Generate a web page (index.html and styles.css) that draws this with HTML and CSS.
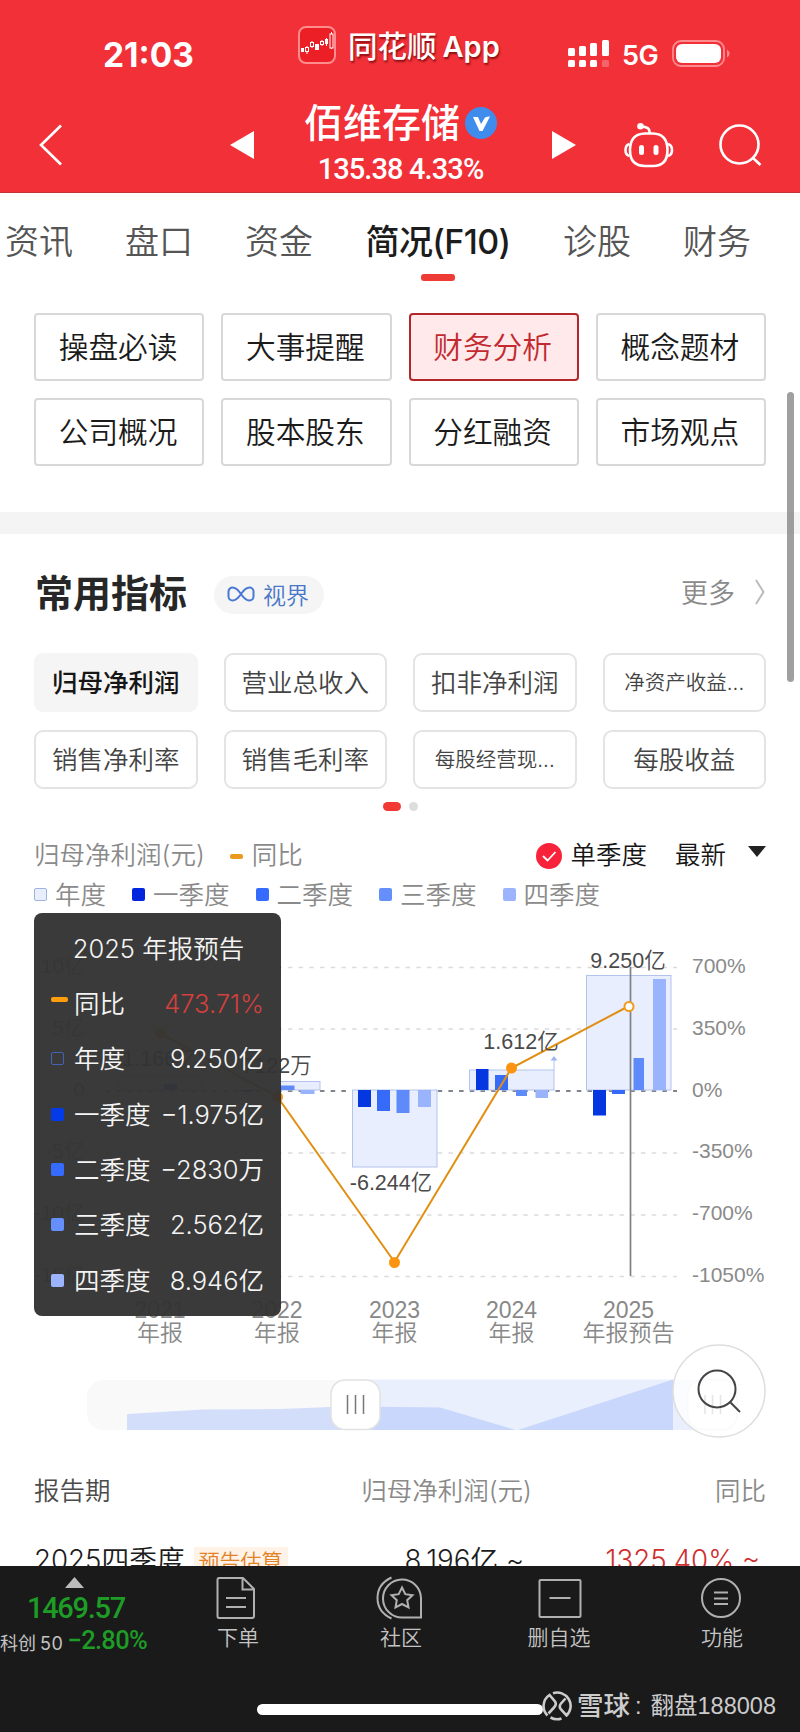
FILE: index.html
```html
<!DOCTYPE html>
<html lang="zh-CN">
<head>
<meta charset="utf-8">
<title>佰维存储</title>
<link rel="stylesheet" href="styles.css">
</head>
<body>
<div class="phone">
  <main class="screen">
    <header class="header">
      <div class="status">
        <span class="time">21:03</span>
        <svg class="app-icon" width="38" height="38" viewBox="0 0 38 38">
          <rect x="1" y="1" width="36" height="36" rx="7" fill="#ec1f26" stroke="#ff8d8d" stroke-width="2"/>
          <g fill="#fff"><rect x="3" y="22" width="3" height="4"/><rect x="17" y="18" width="4" height="6"/><rect x="27" y="13" width="3" height="5"/></g>
          <g fill="none" stroke="#fff"><path d="M9 21v-1M9 26v2M14 15v1M14 21v1M24 14v1M24 19v1M33.500 6v2M33.500 22v1M28.500 12v8"/><rect x="7.500" y="21.500" width="3" height="4"/><rect x="12.500" y="16.500" width="3" height="4"/><rect x="22.500" y="15.500" width="3" height="3"/><rect x="32" y="8" width="3" height="14"/></g>
        </svg>
        <span class="app-name">同花顺<span class="app-latin">App</span></span>
        <svg class="signal" width="42" height="30" viewBox="0 0 42 30" fill="#fff">
          <rect x="0" y="9" width="7" height="8" rx="1.500"/><rect x="11" y="7" width="7" height="10" rx="1.500"/><rect x="22" y="4" width="7" height="13" rx="1.500"/><rect x="34" y="1" width="7" height="16" rx="1.500"/>
          <rect x="0" y="21" width="7" height="7" rx="1.500"/><rect x="11" y="21" width="7" height="7" rx="1.500"/><rect x="22" y="21" width="7" height="7" rx="1.500"/><rect x="34" y="21" width="7" height="7" rx="1.500" opacity=".25"/>
        </svg>
        <span class="net">5G</span>
        <svg class="battery" width="58" height="27" viewBox="0 0 58 27">
          <rect x="1" y="1" width="51" height="25" rx="8" fill="none" stroke="#ff8b8f" stroke-width="1.800"/>
          <rect x="4" y="4" width="45" height="19" rx="6" fill="#fff"/><path d="M55 9.500q5 4 0 8z" fill="#ff8b8f"/>
        </svg>
      </div>
      <div class="nav">
        <svg class="back" width="24" height="42" viewBox="0 0 24 42"><path d="M22 1.500L2 21l20 19.500" fill="none" stroke="#fff" stroke-width="2.600"/></svg>
        <svg class="prev" width="24" height="28" viewBox="0 0 24 28"><path d="M24 0v28L0 14z" fill="#fff"/></svg>
        <div class="stock">
          <div class="stock-name">佰维存储
            <svg width="32" height="32" viewBox="0 0 32 32"><circle cx="16" cy="16" r="16" fill="#3f8cec"/><path d="M8 10h5l3 7 4-6.500q1.500-1 5-1L17.500 24h-3z" fill="#fff"/></svg>
          </div>
          <div class="stock-price">135.38 4.33%</div>
        </div>
        <svg class="next" width="24" height="28" viewBox="0 0 24 28"><path d="M0 0v28L24 14z" fill="#fff"/></svg>
        <svg class="robot" width="50" height="46" viewBox="0 0 50 46" fill="none" stroke="#fff" stroke-width="2.600">
          <path d="M25.500 10V8.500q0-4.500-8-5"/><circle cx="16.500" cy="3.300" r="3.300" fill="#fff" stroke="none"/>
          <path d="M21 10.500h8Q43.500 11 43.500 27 43.500 43 29 43H21Q6 43 6 27 6 11 21 10.500z"/>
          <path d="M5.500 21Q1.500 22 1.500 27t4 6M44 21q4 1 4 6t-4 6"/>
          <rect x="15" y="22" width="5" height="10" rx="2.500" fill="#fff" stroke="none"/><rect x="29.500" y="22" width="5" height="10" rx="2.500" fill="#fff" stroke="none"/>
        </svg>
        <svg class="search" width="43" height="43" viewBox="0 0 43 43" fill="none" stroke="#fff" stroke-width="2.600"><circle cx="20.500" cy="20.500" r="19"/><path d="M34 34l7.500 7"/></svg>
      </div>
    </header>

    <nav class="tabs">
      <span>资讯</span><span>盘口</span><span>资金</span><span class="tab-on">简况(F10)</span><span>诊股</span><span>财务</span>
    </nav>

    <section class="menu">
      <span>操盘必读</span><span>大事提醒</span><span class="menu-on">财务分析</span><span>概念题材</span>
      <span>公司概况</span><span>股本股东</span><span>分红融资</span><span>市场观点</span>
    </section>
    <div class="divider"></div>

    <section class="head">
      <h2>常用指标</h2>
      <span class="pill"><svg width="28" height="16" viewBox="0 0 28 16"><path d="M14 8C10 2 8 1.500 5.500 1.500A4 4 0 0 0 1.500 5.500v5a4 4 0 0 0 4 4C8 14.500 10 14 14 8s6-6.500 8.500-6.500a4 4 0 0 1 4 4v5a4 4 0 0 1-4 4C20 14.500 18 14 14 8z" fill="none" stroke="#4a78d4" stroke-width="2"/></svg>视界</span>
      <span class="more">更多<svg width="10" height="26" viewBox="0 0 10 26"><path d="M1 1l7.500 12L1 25" fill="none" stroke="#bbb" stroke-width="2"/></svg></span>
    </section>

    <section class="metrics">
      <span class="metric-on">归母净利润</span><span>营业总收入</span><span>扣非净利润</span><span class="small">净资产收益...</span>
      <span>销售净利率</span><span>销售毛利率</span><span class="small">每股经营现...</span><span>每股收益</span>
    </section>
    <div class="dots"><i class="dot-on"></i><i></i></div>

    <div class="legend-top">
      <span>归母净利润(元)</span><i class="dash"></i><span>同比</span>
      <svg class="check" width="26" height="26" viewBox="0 0 26 26"><circle cx="13" cy="13" r="13" fill="#f8233b"/><path d="M7 13l4.500 4.500L19.500 9" fill="none" stroke="#fff" stroke-width="1.800"/></svg>
      <span class="ink">单季度</span><span class="ink latest">最新</span><svg class="caret" width="18" height="11" viewBox="0 0 18 11"><path d="M0 0h18L9 11z" fill="#222"/></svg>
    </div>
    <div class="legend">
      <span><i class="sq year"></i>年度</span><span><i class="sq q1"></i>一季度</span><span><i class="sq q2"></i>二季度</span><span><i class="sq q3"></i>三季度</span><span><i class="sq q4"></i>四季度</span>
    </div>

    <section class="chart">
      <svg class="plot" width="800" height="457" viewBox="0 913 800 457">
        <g stroke="#dcdcdc" stroke-width="1.300" stroke-dasharray="4.500 6.200"><path d="M106 967.500H677M106 1029H677M106 1153H677M106 1215H677M106 1276.500H677"/></g>
        <path d="M106 1091H677" stroke="#555b66" stroke-width="1.600" stroke-dasharray="4.500 6.200"/>
        <g fill="#e8eefd" stroke="#b4c3ee">
          <rect x="118" y="1076" width="84" height="14"/><rect x="235" y="1081.500" width="85" height="8.500"/><rect x="352.500" y="1090" width="84.500" height="77"/><rect x="469.500" y="1070" width="84.500" height="20"/><rect x="586.500" y="975.500" width="84.500" height="114.500"/>
        </g>
        <path d="M554 1070v-11" stroke="#b4c3ee"/><path d="M550.500 1060.500h7l-3.500-4.500z" fill="#9eb5f2"/>
        <g fill="#0437df"><rect x="358" y="1090" width="13" height="17"/><rect x="476" y="1069" width="12.500" height="21"/><rect x="593" y="1090" width="13" height="25.500"/><rect x="241" y="1090" width="13" height="1.500"/></g>
        <g fill="#356bf8"><rect x="377" y="1090" width="13" height="21"/><rect x="495" y="1075" width="13" height="15"/><rect x="612" y="1090" width="13" height="4"/><rect x="164" y="1084" width="13" height="6"/></g>
        <g fill="#5f8bfa"><rect x="396.500" y="1090" width="13" height="23"/><rect x="516" y="1090" width="11" height="6"/><rect x="633.500" y="1058" width="10.500" height="32"/><rect x="280" y="1085.500" width="14.500" height="4.500"/></g>
        <g fill="#9ab3fd"><rect x="418" y="1090" width="13" height="17"/><rect x="535.500" y="1090" width="12.500" height="8"/><rect x="653" y="979" width="13" height="111"/><rect x="300.500" y="1090" width="14" height="4"/></g>
        <path d="M630.500 967v309" stroke="#808080" stroke-width="1.700"/>
        <path d="M160 1033L277.500 1097 394.500 1262 511.500 1068 629 1006" fill="none" stroke="#e08f12" stroke-width="2"/>
        <g fill="#fb9410"><circle cx="160" cy="1033" r="5.500"/><circle cx="277.500" cy="1097" r="5.500"/><circle cx="394.500" cy="1262.500" r="5.500"/><circle cx="511.500" cy="1068" r="5.500"/></g>
        <circle cx="629" cy="1006.500" r="4.500" fill="#fff" stroke="#f29a1c" stroke-width="2"/>
        <g class="values"><text x="160" y="1066">1.166亿</text><text x="277" y="1073">7122万</text><text x="391" y="1190">-6.244亿</text><text x="521" y="1049">1.612亿</text><text x="628" y="967.500">9.250亿</text></g>
        <g class="axis"><text x="692" y="973">700%</text><text x="692" y="1035">350%</text><text x="692" y="1096.500">0%</text><text x="692" y="1158">-350%</text><text x="692" y="1220">-700%</text><text x="692" y="1282">-1050%</text></g>
        <g class="axis left"><text x="85" y="973">10亿</text><text x="85" y="1035">5亿</text><text x="85" y="1096.500">0</text><text x="85" y="1158">-5亿</text><text x="85" y="1220">-10亿</text><text x="85" y="1282">-15亿</text></g>
        <g class="years"><text x="160" y="1318">2021</text><text x="160" y="1341">年报</text><text x="277" y="1318">2022</text><text x="277" y="1341">年报</text><text x="394.500" y="1318">2023</text><text x="394.500" y="1341">年报</text><text x="511.500" y="1318">2024</text><text x="511.500" y="1341">年报</text><text x="628.500" y="1318">2025</text><text x="628.500" y="1341">年报预告</text></g>
      </svg>
      <div class="tooltip">
        <div class="tip-title">2025 年报预告</div>
        <div class="tip-row"><i class="dash tip-dash"></i><span>同比</span><b class="up">473.71%</b></div>
        <div class="tip-row"><i class="sq tip-year"></i><span>年度</span><b>9.250亿</b></div>
        <div class="tip-row"><i class="sq q1t"></i><span>一季度</span><b>−1.975亿</b></div>
        <div class="tip-row"><i class="sq q2"></i><span>二季度</span><b>−2830万</b></div>
        <div class="tip-row"><i class="sq q3"></i><span>三季度</span><b>2.562亿</b></div>
        <div class="tip-row"><i class="sq q4"></i><span>四季度</span><b>8.946亿</b></div>
      </div>
    </section>

    <div class="slider">
      <svg class="plot" width="800" height="70" viewBox="0 1370 800 70">
        <rect x="87" y="1380" width="650" height="50" rx="16" fill="#f9f9f9"/>
        <path d="M356 1379.500H712V1430H356z" fill="#e9effc"/>
        <path d="M127 1414L203 1409.500 280 1409 330 1407 356 1406.500V1430H127z" fill="#d3dffa"/>
        <path d="M356 1406.500L440 1407.500 516 1430H356zM518 1430L673 1379.500V1430z" fill="#c8d7fb"/>
        <rect x="331" y="1380" width="49" height="49.500" rx="14" fill="#fff" stroke="#e2e2e2" stroke-width="1.500"/>
        <path d="M347.500 1395v19M355.500 1395v19M363.500 1395v19" stroke="#777" stroke-width="1.500"/>
        <rect x="688" y="1380" width="49" height="49.500" rx="14" fill="#fff" stroke="#e2e2e2" stroke-width="1.500"/>
        <path d="M705 1395v19M712.500 1395v19M720.500 1395v19" stroke="#777" stroke-width="1.500"/>
      </svg>
      <svg class="float-search" width="94" height="94" viewBox="0 0 94 94" fill="none"><circle cx="47" cy="47" r="46" fill="#fff" fill-opacity=".8" stroke="#dedede" stroke-width="1.500"/><circle cx="45" cy="45" r="18.500" stroke="#444" stroke-width="2"/><path d="M58 58l10 10" stroke="#444" stroke-width="2"/></svg>
    </div>

    <div class="row row-head"><span class="dark">报告期</span><span>归母净利润(元)</span><span>同比</span></div>
    <div class="row row-data"><span>2025四季度<em>预告估算</em></span><span>8.196亿 ~</span><span class="up2">1325.40% ~</span></div>
  </main>

  <footer class="bottom">
    <div class="index">
      <svg width="19" height="11" viewBox="0 0 19 11"><path d="M0 11h19L9.500 0z" fill="#bbb"/></svg>
      <div class="idx-value">1469.57</div>
      <div class="idx-line"><span>科创<small>50</small></span><b>−2.80%</b></div>
    </div>
    <div class="tool t1"><svg width="40" height="44" viewBox="0 0 40 44"><path d="M3 2h24l11 11v27q0 2-2 2H3q-1.500 0-1.500-2V4Q1.500 2 3 2zM26.500 2v11.500H38M10 22h20M10 31h20"/></svg><span>下单</span></div>
    <div class="tool t2"><svg width="46" height="44" viewBox="0 0 46 44"><path d="M15.500 1.500Q1.500 8 1.500 22t14 20.500M45 41.500H26A19 19 0 1 1 45 22zM26 11.500l3.300 6.700 7.200 1-5.300 5 1.300 7.300-6.500-3.500-6.500 3.500 1.300-7.300-5.300-5 7.200-1z"/></svg><span>社区</span></div>
    <div class="tool t3"><svg width="44" height="44" viewBox="0 0 44 44"><rect x="1.500" y="4" width="41" height="37" rx="1"/><path d="M11.500 22h21"/></svg><span>删自选</span></div>
    <div class="tool t4"><svg width="44" height="44" viewBox="0 0 44 44"><circle cx="21" cy="22" r="19"/><path d="M14 16.500h14M14 22.500h14M14 28h14"/></svg><span>功能</span></div>
    <div class="home"></div>
    <div class="mark">
      <svg width="30" height="30" viewBox="0 0 30 30" fill="none" stroke="#ccc" stroke-width="2.600"><path d="M5.500 24.500A13.300 13.300 0 0 1 7.500 4L13 10.500Q15 13.500 12 16.500L6.500 22.500M11 2.300A13.300 13.300 0 0 1 24.500 24.500L19 18.500Q16.500 15.500 19 12.500L23.500 7.500M8.500 26.500A13.300 13.300 0 0 0 19.500 27.500"/></svg>
      <span class="brand">雪球</span><span class="colon">:</span><span>翻盘188008</span>
    </div>
  </footer>
  <div class="scrollbar"></div>
</div>
</body>
</html>
```
FILE: styles.css
```css
* { box-sizing: border-box; }
body { margin: 0; font-family: Inter, "Noto Sans CJK SC", sans-serif; font-weight: 350; background: #fff; }
svg { display: block; flex: none; }
i, em { font-style: normal; }
span { white-space: nowrap; }
.phone { position: relative; width: 800px; height: 1732px; overflow: hidden; }
.screen { height: 1566px; overflow: hidden; }

.header { height: 193px; background: #f23038; color: #fff; border-bottom: 1px solid #c2333a; }
.status { display: flex; align-items: flex-start; height: 90px; padding-left: 103px; }
.time { width: 195px; padding-top: 35px; font-size: 33.500px; line-height: 40px; font-weight: 700; }
.app-icon { margin-top: 26px; }
.app-name { width: 220px; margin-left: 12px; padding-top: 26px; font-size: 29.500px; line-height: 40px; font-weight: 500; text-shadow: 1px 2px 2px rgba(90, 0, 0, .7); }
.app-latin { margin-left: 6px; font-size: 29px; font-weight: 600; }
.signal { margin: 39px 0 0; }
.net { width: 40px; margin-left: 12px; padding-top: 36px; font-size: 27px; line-height: 40px; font-weight: 600; letter-spacing: -.5px; }
.battery { margin: 40px 0 0 10px; }
.nav { display: flex; align-items: flex-start; padding-left: 39px; }
.back { margin-top: 34px; }
.prev { margin: 41px 0 0 167px; }
.stock { width: 193px; margin-left: 50px; }
.stock-name { display: flex; align-items: center; justify-content: space-between; font-size: 39px; line-height: 66px; font-weight: 500; white-space: nowrap; }
.stock-price { margin-top: -3px; text-align: center; font: 500 29px/32px Roboto, sans-serif; letter-spacing: -.9px; }
.next { margin: 41px 0 0 55px; }
.robot { margin: 33px 0 0 48px; }
.search { margin: 34px 0 0 45px; }

.tabs { display: flex; gap: 52px; height: 120px; padding: 24px 0 0 5px; font-size: 34px; line-height: 50px; color: #555; }
.tab-on { display: flex; flex-direction: column; align-items: center; width: 146px; color: #1c1c1c; font-weight: 500; letter-spacing: -.6px; }
.tab-on::after { content: ""; width: 34px; height: 7px; margin-top: 7px; border-radius: 3px; background: #ee3b36; }

.menu { display: grid; grid-template-columns: repeat(4, 1fr); grid-auto-rows: 68px; gap: 17px; height: 199px; padding: 0 34px; }
.menu span { display: flex; align-items: center; justify-content: center; padding: 0 2px 3px 0; border: 2px solid #d8d8d8; border-radius: 4px; font-size: 29.700px; color: #1b1b1b; }
.menu .menu-on { border-color: #b3262c; background: #ffe9ea; color: #c22a30; }
.divider { height: 22px; background: #f4f4f4; }

.head { display: flex; align-items: center; height: 119px; padding: 0 34px; }
h2 { margin: -2px 0 0 1px; width: 179px; font-size: 38px; line-height: 50px; font-weight: 700; color: #272727; white-space: nowrap; }
.pill { display: flex; align-items: center; gap: 8px; width: 110px; height: 38px; margin-top: 3px; padding: 0 0 2px 13px; border-radius: 19px; background: #f5f5f5; color: #4a78c8; font-size: 23px; }
.more { display: flex; align-items: center; gap: 20px; margin: -4px 1px 0 auto; font-size: 27px; color: #8a8a8a; }

.metrics { display: grid; grid-template-columns: repeat(4, 1fr); grid-auto-rows: 59px; gap: 18px 26px; height: 149px; padding: 0 34px; }
.metrics span { display: flex; align-items: center; justify-content: center; padding-bottom: 4px; border: 2px solid #e4e4e4; border-radius: 9px; font-size: 25.500px; color: #444; }
.metrics .small { font-size: 20.500px; }
.metrics .metric-on { border-color: #f5f5f5; background: #f5f5f5; color: #161616; font-weight: 500; }
.dots { display: flex; gap: 8px; height: 34px; padding-left: 383px; }
.dots i { width: 9px; height: 9px; border-radius: 5px; background: #ddd; }
.dots .dot-on { width: 18px; background: #f23a35; }

.legend-top { display: flex; align-items: center; height: 40px; padding: 0 34px; font-size: 25.500px; line-height: 38px; color: #8a8a8a; }
.legend-top span { margin-top: -2px; }
.dash { width: 13px; height: 5px; margin: 0 9px 0 25px; border-radius: 2px; background: #ea9a1d; }
.check { margin-left: auto; margin-right: 8px; }
.ink { color: #161616; }
.legend-top .latest { margin-left: 28px; }
.caret { margin: -10px 0 0 22px; }
.legend { display: flex; gap: 26px; height: 37px; padding-left: 34px; font-size: 25.500px; line-height: 35px; color: #8a8a8a; }
.legend span { display: flex; align-items: center; height: 36px; }
.legend .sq { margin-top: 1px; margin-right: 8px; }
.sq { width: 13px; height: 13px; margin-right: 9px; border-radius: 2px; }
.year { background: #e8eefd; border: 1px solid #9fb3df; }
.q1 { background: #0226dd; } .q1t { background: #043be8; } .q2 { background: #356bff; } .q3 { background: #6590fc; } .q4 { background: #9cb4fd; }

.chart { position: relative; height: 457px; }
.values text, .years text { text-anchor: middle; }
.values { font: 350 21.500px "Liberation Sans", "Noto Sans CJK SC", sans-serif; fill: #4a4a4a; }
.axis { font: 350 21px "Liberation Sans", "Noto Sans CJK SC", sans-serif; fill: #8a8a8a; }
.left text { text-anchor: end; }
.years { font: 350 23px "Liberation Sans", "Noto Sans CJK SC", sans-serif; fill: #888; }
.tooltip { position: absolute; left: 34px; top: 0; width: 247px; height: 403px; padding: 9px 17px 0; border-radius: 8px; background: rgba(51, 51, 51, .965); color: #f4f4f4; font-size: 25.500px; }
.tip-title { padding-left: 2px; height: 54px; line-height: 54px; text-align: center; }
.tip-row { display: flex; align-items: center; height: 55.300px; line-height: 55px; }
.tip-row .sq { margin-right: 10px; }
.tip-row b { margin-left: auto; font-weight: 350; font-size: 25.500px; white-space: nowrap; }
.tip-row .up { color: #d3403e; }
.tip-dash { width: 17px; margin: -8px 6px 0 0; background: #ff9e0d; }
.tip-year { border: 1px solid #4563b5; }

.slider { position: relative; height: 70px; }
.float-search { position: absolute; left: 672px; top: -26px; }
.row { display: grid; grid-template-columns: 264px 1fr 1fr; padding: 0 34px; }
.row span { text-align: right; }
.row span:first-child { text-align: left; }
.row-head { height: 74px; padding-top: 29px; font-size: 25.500px; line-height: 44px; color: #8a8a8a; }
.row .dark { color: #4b4b4b; }
.row-data { padding-top: 23px; font-size: 27.700px; line-height: 46px; color: #1c1c1c; }
.row-data span:nth-child(2) { padding-right: 8px; }
.row-data .up2 { padding-right: 6px; color: #cf2f2f; }
.row em { display: inline-block; margin-left: 9px; padding: 0 5px; height: 34px; line-height: 30px; vertical-align: 1px; font-size: 21px; color: #e38225; background: #fff3e8; }

.bottom { position: relative; display: flex; height: 166px; background: #1a1a1a; color: #c4c4c4; }
.index { width: 150px; padding-top: 11px; }
.index svg { margin-left: 65px; }
.idx-value { margin: 3px 0 0 27px; font: 500 29px/34px Roboto, sans-serif; letter-spacing: -1.300px; color: #1d9c26; }
.idx-line { display: flex; align-items: center; justify-content: space-between; width: 147px; height: 33px; font-size: 18px; font-weight: 400; }
.idx-line small { margin-left: 4px; font-size: 18px; letter-spacing: .5px; }
.idx-line b { padding-bottom: 3px; font: 500 25.500px/31px Roboto, sans-serif; letter-spacing: -.7px; color: #1d9c26; }
.tool { display: flex; flex-direction: column; align-items: center; padding-top: 10px; font-size: 21px; line-height: 32px; font-weight: 350; }
.tool svg { fill: none; stroke: #b0b0b0; stroke-width: 2; }
.tool span { margin: 2px 0 0 4px; }
.t3 { margin-left: -1px; }
.t3 span { margin-left: -2px; }
.t4 span { margin-left: 0; }
.t1 { width: 172px; } .t2 { width: 154px; } .t3 { width: 170px; } .t4 { width: 154px; }
.home { position: absolute; left: 257px; top: 138px; width: 286px; height: 11px; border-radius: 6px; background: #fff; }
.mark { position: absolute; left: 542px; top: 123px; display: flex; align-items: center; height: 34px; color: #ccc; font: 400 23.500px/34px "Liberation Sans", "Noto Sans CJK SC", sans-serif; }
.brand { margin-left: 5px; font-size: 26.500px; font-weight: 500; }
.colon { margin: 0 9px 0 5px; }
.scrollbar { position: absolute; left: 787px; top: 392px; width: 7px; height: 290px; border-radius: 4px; background: rgba(120, 120, 120, .7); }
```
